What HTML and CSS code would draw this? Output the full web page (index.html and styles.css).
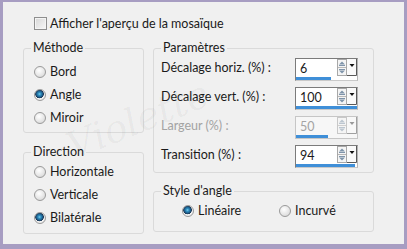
FILE: index.html
```html
<!DOCTYPE html>
<html lang="fr">
<head>
    <meta charset="UTF-8">
    <title>Mosaïque</title>
    <link rel="stylesheet" href="styles.css">
</head>
<body>
    <div class="dialog">
        <div class="check-row">
            <span class="checkbox"></span>
            <span>Afficher l'aperçu de la mosaïque</span>
        </div>
        <div class="columns">
            <div class="col col-left">
                <fieldset class="group group-method">
                    <legend>Méthode</legend>
                    <div class="radio"><span class="dot"></span>Bord</div>
                    <div class="radio"><span class="dot on"></span>Angle</div>
                    <div class="radio"><span class="dot"></span>Miroir</div>
                </fieldset>
                <fieldset class="group group-direction">
                    <legend>Direction</legend>
                    <div class="radio"><span class="dot"></span>Horizontale</div>
                    <div class="radio"><span class="dot"></span>Verticale</div>
                    <div class="radio"><span class="dot on"></span>Bilatérale</div>
                </fieldset>
            </div>
            <div class="col col-right">
                <fieldset class="group group-params">
                    <legend>Paramètres</legend>
                    <div class="param">
                        <span>Décalage horiz. (%) :</span>
                        <div class="spin">
                            <div class="spin-top">
                                <span class="spin-value">6</span>
                                <svg width="10" height="17" viewBox="0 0 10 17"><rect x="0.5" y="0.5" width="9" height="16" fill="#f5f5f5" stroke="#a8a8a8"/><line x1="1" y1="8.5" x2="9" y2="8.5" stroke="#b8b8b8"/><path d="M2 5.5 L5 2.5 L8 5.5 Z" fill="#7f94aa"/><line x1="2" y1="6.5" x2="8" y2="6.5" stroke="#7f94aa"/><path d="M2 11.5 L5 14.5 L8 11.5 Z" fill="#7f94aa"/><line x1="2" y1="10.5" x2="8" y2="10.5" stroke="#7f94aa"/></svg>
                                <svg width="10" height="17" viewBox="0 0 10 17"><rect x="0" y="0" width="10" height="17" fill="#fafafa"/><path d="M9.5 0 V16.5 H0" fill="none" stroke="#5a5a5a"/><path d="M2.5 5 H7.5 L5 8 Z" fill="#111"/></svg>
                            </div>
                            <div class="bar" style="width: 35px"></div>
                        </div>
                    </div>
                    <div class="param">
                        <span>Décalage vert. (%) :</span>
                        <div class="spin">
                            <div class="spin-top">
                                <span class="spin-value">100</span>
                                <svg width="10" height="17" viewBox="0 0 10 17"><rect x="0.5" y="0.5" width="9" height="16" fill="#f5f5f5" stroke="#a8a8a8"/><line x1="1" y1="8.5" x2="9" y2="8.5" stroke="#b8b8b8"/><path d="M2 5.5 L5 2.5 L8 5.5 Z" fill="#7f94aa"/><line x1="2" y1="6.5" x2="8" y2="6.5" stroke="#7f94aa"/><path d="M2 11.5 L5 14.5 L8 11.5 Z" fill="#7f94aa"/><line x1="2" y1="10.5" x2="8" y2="10.5" stroke="#7f94aa"/></svg>
                                <svg width="10" height="17" viewBox="0 0 10 17"><rect x="0" y="0" width="10" height="17" fill="#fafafa"/><path d="M9.5 0 V16.5 H0" fill="none" stroke="#5a5a5a"/><path d="M2.5 5 H7.5 L5 8 Z" fill="#111"/></svg>
                            </div>
                            <div class="bar" style="width: 61px"></div>
                        </div>
                    </div>
                    <div class="param disabled">
                        <span>Largeur (%) :</span>
                        <div class="spin">
                            <div class="spin-top">
                                <span class="spin-value">50</span>
                                <svg width="10" height="17" viewBox="0 0 10 17"><rect x="0.5" y="0.5" width="9" height="16" fill="#f5f5f5" stroke="#c8c8c8"/><line x1="1" y1="8.5" x2="9" y2="8.5" stroke="#d0d0d0"/><path d="M2 5.5 L5 2.5 L8 5.5 Z" fill="#bcc6d0"/><line x1="2" y1="6.5" x2="8" y2="6.5" stroke="#bcc6d0"/><path d="M2 11.5 L5 14.5 L8 11.5 Z" fill="#bcc6d0"/><line x1="2" y1="10.5" x2="8" y2="10.5" stroke="#bcc6d0"/></svg>
                                <svg width="10" height="17" viewBox="0 0 10 17"><rect x="0" y="0" width="10" height="17" fill="#f8f8f8"/><path d="M9.5 0 V16.5 H0" fill="none" stroke="#a0a0a0"/><path d="M2.5 5 H7.5 L5 8 Z" fill="#999"/></svg>
                            </div>
                            <div class="bar" style="width: 32px"></div>
                        </div>
                    </div>
                    <div class="param">
                        <span>Transition (%) :</span>
                        <div class="spin">
                            <div class="spin-top">
                                <span class="spin-value">94</span>
                                <svg width="10" height="17" viewBox="0 0 10 17"><rect x="0.5" y="0.5" width="9" height="16" fill="#f5f5f5" stroke="#a8a8a8"/><line x1="1" y1="8.5" x2="9" y2="8.5" stroke="#b8b8b8"/><path d="M2 5.5 L5 2.5 L8 5.5 Z" fill="#7f94aa"/><line x1="2" y1="6.5" x2="8" y2="6.5" stroke="#7f94aa"/><path d="M2 11.5 L5 14.5 L8 11.5 Z" fill="#7f94aa"/><line x1="2" y1="10.5" x2="8" y2="10.5" stroke="#7f94aa"/></svg>
                                <svg width="10" height="17" viewBox="0 0 10 17"><rect x="0" y="0" width="10" height="17" fill="#fafafa"/><path d="M9.5 0 V16.5 H0" fill="none" stroke="#5a5a5a"/><path d="M2.5 5 H7.5 L5 8 Z" fill="#111"/></svg>
                            </div>
                            <div class="bar" style="width: 59px"></div>
                        </div>
                    </div>
                </fieldset>
                <fieldset class="group group-style">
                    <legend>Style d'angle</legend>
                    <div class="radio-line">
                        <div class="radio first"><span class="dot on"></span>Linéaire</div>
                        <div class="radio"><span class="dot"></span>Incurvé</div>
                    </div>
                </fieldset>
            </div>
        </div>
        <div class="watermark">Violette</div>
    </div>
</body>
</html>
```

FILE: styles.css
```css
body{
    margin: 0;
    background-color: #a79dc2;
    font-family: Lato, "Open Sans", sans-serif;
    font-size: 12.5px;
    color: #1a1a1a;
}
.dialog{
    position: relative;
    height: 242px;
    margin: 2px 3px 5px 3px;
    padding: 15px 30px 0 20px;
    box-sizing: border-box;
    background-color: #f0f0f0;
    overflow: hidden;
}
.check-row{
    display: flex;
    align-items: center;
    gap: 3px;
    height: 13px;
    margin-left: 11px;
}
.checkbox{
    width: 11px;
    height: 11px;
    border: 1px solid #8e8e8e;
    background: linear-gradient(135deg, #d6d6d6, #f7f7f7);
    box-shadow: inset 0 0 0 1px #f4f4f4;
}
.columns{
    display: flex;
    gap: 9px;
    margin-top: 10px;
}
.col{
    display: flex;
    flex-direction: column;
}
.col-left{
    width: 121px;
}
.col-right{
    width: 221px;
}
.group{
    margin: 0;
    min-width: 0;
    border: 1px solid #dadada;
    border-radius: 3px;
    padding: 4px 10px 3px 7px;
}
.group legend{
    padding: 0 2px;
    line-height: 16px;
}
.group-direction{
    margin-top: 11px;
    padding-top: 0;
    padding-bottom: 4px;
}
.radio{
    display: flex;
    align-items: center;
    gap: 4px;
    height: 23px;
    margin-left: 3px;
}
.dot{
    width: 10px;
    height: 10px;
    border: 1px solid #9a9a9a;
    border-radius: 50%;
    background: radial-gradient(circle at 40% 35%, #ffffff 0, #e4e4e4 60%, #cfcfcf 100%);
}
.dot.on{
    background:
        radial-gradient(circle at 45% 40%, #7fd0ee 0, #2d8dbf 1.5px, #1e5f8c 3px, #1a3553 4px, #f3f3f3 4.6px, #dcdcdc 100%);
}
.group-params{
    padding: 2px 15px 4px 7px;
}
.param{
    display: flex;
    justify-content: space-between;
    align-items: center;
    height: 23px;
    margin-bottom: 6px;
}
.param:last-child{
    margin-bottom: 0;
}
.param > span{
    margin-top: -4px;
}
.param.disabled{
    color: #a3a3a3;
}
.spin{
    width: 61px;
    border: 1px solid #7b7b7b;
    border-right-color: #b5b5b5;
    border-bottom-color: #c9c9c9;
    background-color: #ffffff;
}
.disabled .spin{
    border-color: #c6c6c6;
    background-color: #f7f7f7;
}
.spin-top{
    display: flex;
    height: 18px;
}
.spin-top svg{
    display: block;
    flex: none;
}
.spin-value{
    flex: 1;
    padding-left: 4px;
    line-height: 20px;
}
.bar{
    height: 3px;
    background-color: #3f8fd8;
}
.group-style{
    margin-top: 10px;
    padding-top: 0;
    padding-bottom: 9px;
}
.radio-line{
    display: flex;
    margin-left: 18px;
}
.radio-line .first{
    width: 94px;
}
.watermark{
    position: absolute;
    left: 60px;
    top: 96px;
    font-family: "DejaVu Serif", serif;
    font-style: italic;
    font-size: 38px;
    color: rgba(0, 0, 0, 0.045);
    transform: rotate(-22deg);
    pointer-events: none;
}
```
